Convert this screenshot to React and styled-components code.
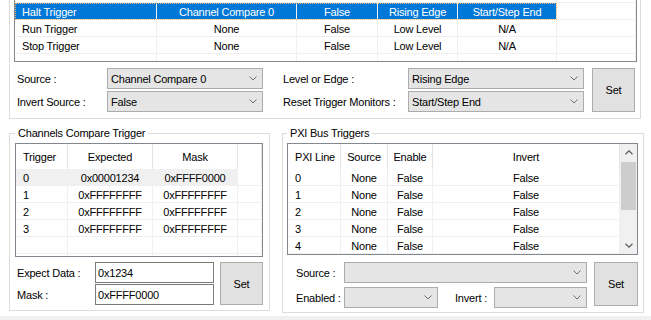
import styled, { createGlobalStyle } from "styled-components";

const GlobalStyle = createGlobalStyle`
  html, body { margin: 0; padding: 0; background: #fff; }
  body {
    font-family: "Liberation Sans", Arial, sans-serif;
    font-size: 11px;
    letter-spacing: -0.2px;
    color: #000;
  }
  * { box-sizing: border-box; }
`;

const Page = styled.div`
  width: 651px;
  height: 320px;
  overflow: hidden;
  display: flex;
  flex-direction: column;
  background: #fff;
`;

const GroupBox = styled.fieldset`
  display: flex;
  flex-direction: column;
  flex: none;
  min-width: 0;
  width: ${(p) => p.$width}px;
  margin: ${(p) => p.$margin};
  padding: ${(p) => p.$padding};
  border: 1px solid #dcdcdc;
`;

const Legend = styled.legend`
  margin: 0;
  padding: 0 3px;
  line-height: 13px;
`;

const ListView = styled.div`
  display: flex;
  flex: none;
  height: ${(p) => p.$height}px;
  border: 1px solid #828790;
  background: #fff;
  overflow: hidden;
`;

const Columns = styled.div`
  flex: 1;
  min-width: 0;
  display: flex;
  flex-direction: column;
`;

const HeaderRow = styled.div`
  display: flex;
  flex: none;
  height: 25px;
`;

const HeadCell = styled.div`
  flex: ${(p) => (p.$w ? `0 0 ${p.$w}px` : "1 1 0")};
  display: flex;
  align-items: center;
  justify-content: ${(p) => (p.$left ? "flex-start" : "center")};
  padding-left: ${(p) => (p.$left ? "7px" : "0")};
  border-right: 1px solid #e5e5e5;
  white-space: nowrap;
  overflow: hidden;
`;

const Row = styled.div`
  display: flex;
  flex: none;
  height: 17px;
`;

const Selection = styled.div`
  display: flex;
  flex: none;
  background: ${(p) => (p.$focus ? "#0078d7" : "#f0f0f0")};
  color: ${(p) => (p.$focus ? "#fff" : "#000")};
  outline: ${(p) => (p.$focus ? "1px dotted #f2b56b" : "none")};
  outline-offset: -1px;
`;

const Cell = styled.div`
  flex: ${(p) => (p.$w ? `0 0 ${p.$w}px` : "1 1 0")};
  display: flex;
  align-items: center;
  justify-content: ${(p) => (p.$left ? "flex-start" : "center")};
  padding: 2px 0 0 ${(p) => (p.$left ? "7px" : "0")};
  border-right: 1px solid #f0f0f0;
  border-bottom: 1px solid #f0f0f0;
  white-space: nowrap;
  overflow: hidden;
`;

const ScrollBar = styled.div`
  flex: 0 0 17px;
  display: flex;
  flex-direction: column;
  background: #f0f0f0;
`;

const ScrollArrow = styled.div`
  flex: none;
  height: 17px;
  display: flex;
  align-items: center;
  justify-content: center;
`;

const Thumb = styled.div`
  flex: none;
  height: 48px;
  margin: 1px 1px 0;
  background: #cdcdcd;
`;

const Track = styled.div`
  flex: 1;
`;

const Settings = styled.div`
  display: grid;
  grid-template-columns: 90px 156px 145px 176px 51px;
  grid-template-rows: 21px 21px;
  row-gap: 2px;
  margin: 6px 0 0 3px;
`;

const Label = styled.span`
  display: flex;
  align-items: center;
  flex: none;
  height: 21px;
  width: ${(p) => (p.$w ? `${p.$w}px` : "auto")};
  padding-left: ${(p) => p.$pad || 0}px;
  white-space: nowrap;
`;

const Combo = styled.div`
  flex: none;
  width: ${(p) => p.$w}px;
  height: 21px;
  display: flex;
  align-items: center;
  padding: 1px 5px 0 3px;
  border: 1px solid #acacac;
  background: #e5e5e5;
`;

const ComboText = styled.span`
  flex: 1;
  white-space: nowrap;
  overflow: hidden;
`;

const SetButton = styled.button`
  width: ${(p) => p.$w}px;
  height: ${(p) => p.$h}px;
  padding: 0;
  border: 1px solid #adadad;
  background: #e1e1e1;
  color: #000;
  font: inherit;
  letter-spacing: inherit;
  grid-column: ${(p) => p.$col || "auto"};
  grid-row: ${(p) => (p.$col ? "1 / span 2" : "auto")};
  justify-self: end;
  flex: none;
`;

const TextBox = styled.input`
  width: 119px;
  height: 21px;
  margin: 0;
  padding: 1px 2px 0;
  border: 1px solid #7a7a7a;
  background: #fff;
  color: #000;
  font: inherit;
  letter-spacing: inherit;
  outline: none;
`;

const BottomRow = styled.div`
  display: flex;
  align-items: flex-start;
  flex: none;
  height: 189px;
  margin-top: 8px;
`;

const CompareControls = styled.div`
  display: grid;
  grid-template-columns: 78px 119px 6px 43px;
  grid-template-rows: 21px 21px;
  row-gap: 1px;
  margin: 5px 0 0 2px;
`;

const PxiControls = styled.div`
  display: flex;
  gap: 7px;
  margin: 7px 0 0 9px;
`;

const ControlStack = styled.div`
  display: flex;
  flex-direction: column;
  gap: 4px;
`;

const ControlLine = styled.div`
  display: flex;
  align-items: center;
`;

const Footer = styled.div`
  flex: 1;
  background: #f0f0f0;
`;

const Chevron = () => (
  <svg width="8" height="5" viewBox="0 0 8 5" style={{ marginTop: -2 }}>
    <path d="M0.5 0.5 L4 4 L7.5 0.5" fill="none" stroke="#707070" strokeWidth="1" />
  </svg>
);

const Arrow = ({ down }) => (
  <svg width="8" height="5" viewBox="0 0 8 5">
    <path
      d={down ? "M0.5 0.8 L4 4.2 L7.5 0.8" : "M0.5 4.2 L4 0.8 L7.5 4.2"}
      fill="none"
      stroke="#606060"
      strokeWidth="1.3"
    />
  </svg>
);

const ComboBox = ({ w, value }) => (
  <Combo $w={w}>
    <ComboText>{value}</ComboText>
    <Chevron />
  </Combo>
);

function ListGrid({ cols, headers, rows, height, selected, focus, scroll }) {
  const fixed = cols.filter((c) => c.w);
  return (
    <ListView $height={height}>
      <Columns>
        {headers && (
          <HeaderRow>
            {cols.map((c, i) => (
              <HeadCell key={i} $w={c.w} $left={c.left}>
                {headers[i]}
              </HeadCell>
            ))}
          </HeaderRow>
        )}
        {rows.map((r, ri) => {
          const cells = cols.map((c, i) => (
            <Cell key={i} $w={c.w} $left={c.left}>
              {r[i] || ""}
            </Cell>
          ));
          if (ri === selected) {
            return (
              <Row key={ri}>
                <Selection $focus={focus}>{cells.slice(0, fixed.length)}</Selection>
                {cells.slice(fixed.length)}
              </Row>
            );
          }
          return <Row key={ri}>{cells}</Row>;
        })}
      </Columns>
      {scroll && (
        <ScrollBar>
          <ScrollArrow>
            <Arrow />
          </ScrollArrow>
          <Thumb />
          <Track />
          <ScrollArrow>
            <Arrow down />
          </ScrollArrow>
        </ScrollBar>
      )}
    </ListView>
  );
}

// the trigger list is scrolled: its header and first row sit above the window
const topCols = [{ w: 142, left: true }, { w: 140 }, { w: 81 }, { w: 80 }, { w: 99 }, {}];
const topRows = [
  [],
  ["Halt Trigger", "Channel Compare 0", "False", "Rising Edge", "Start/Step End"],
  ["Run Trigger", "None", "False", "Low Level", "N/A"],
  ["Stop Trigger", "None", "False", "Low Level", "N/A"],
  [],
];

const compareCols = [{ w: 52, left: true }, { w: 85 }, { w: 85 }, {}];
const compareRows = [
  ["0", "0x00001234", "0xFFFF0000"],
  ["1", "0xFFFFFFFF", "0xFFFFFFFF"],
  ["2", "0xFFFFFFFF", "0xFFFFFFFF"],
  ["3", "0xFFFFFFFF", "0xFFFFFFFF"],
  [],
  [],
];

const pxiCols = [{ w: 53, left: true }, { w: 47 }, { w: 45 }, {}];
const pxiRows = [0, 1, 2, 3, 4].map((n) => [String(n), "None", "False", "False"]);

export default function App() {
  return (
    <Page>
      <GlobalStyle />
      <GroupBox $width={632} $margin="-23px 0 0 9px" $padding="7px 3px 6px 4px">
        <ListGrid cols={topCols} rows={topRows} height={77} selected={1} focus />
        <Settings>
          <Label>Source :</Label>
          <ComboBox w={156} value="Channel Compare 0" />
          <Label $pad={20}>Level or Edge :</Label>
          <ComboBox w={176} value="Rising Edge" />
          <SetButton $w={43} $h={44} $col={5}>
            Set
          </SetButton>
          <Label>Invert Source :</Label>
          <ComboBox w={156} value="False" />
          <Label $pad={20}>Reset Trigger Monitors :</Label>
          <ComboBox w={176} value="Start/Step End" />
        </Settings>
      </GroupBox>

      <BottomRow>
        <GroupBox $width={261} $margin="0 0 0 9px" $padding="3px 6px 5px 5px">
          <Legend>Channels Compare Trigger</Legend>
          <ListGrid
            cols={compareCols}
            headers={["Trigger", "Expected", "Mask", ""]}
            rows={compareRows}
            height={114}
            selected={0}
          />
          <CompareControls>
            <Label>Expect Data :</Label>
            <TextBox readOnly defaultValue="0x1234" />
            <span />
            <SetButton $w={43} $h={43} $col={4}>
              Set
            </SetButton>
            <Label>Mask :</Label>
            <TextBox readOnly defaultValue="0xFFFF0000" />
          </CompareControls>
        </GroupBox>

        <GroupBox $width={362} $margin="0 0 0 12px" $padding="3px 5px 4px 4px">
          <Legend>PXI Bus Triggers</Legend>
          <ListGrid
            cols={pxiCols}
            headers={["PXI Line", "Source", "Enable", "Invert"]}
            rows={pxiRows}
            height={112}
            scroll
          />
          <PxiControls>
            <ControlStack>
              <ControlLine>
                <Label $w={48}>Source :</Label>
                <ComboBox w={243} value="" />
              </ControlLine>
              <ControlLine>
                <Label $w={48}>Enabled :</Label>
                <ComboBox w={94} value="" />
                <Label $w={56} $pad={17}>
                  Invert :
                </Label>
                <ComboBox w={93} value="" />
              </ControlLine>
            </ControlStack>
            <SetButton $w={44} $h={44}>
              Set
            </SetButton>
          </PxiControls>
        </GroupBox>
      </BottomRow>
      <Footer />
    </Page>
  );
}
